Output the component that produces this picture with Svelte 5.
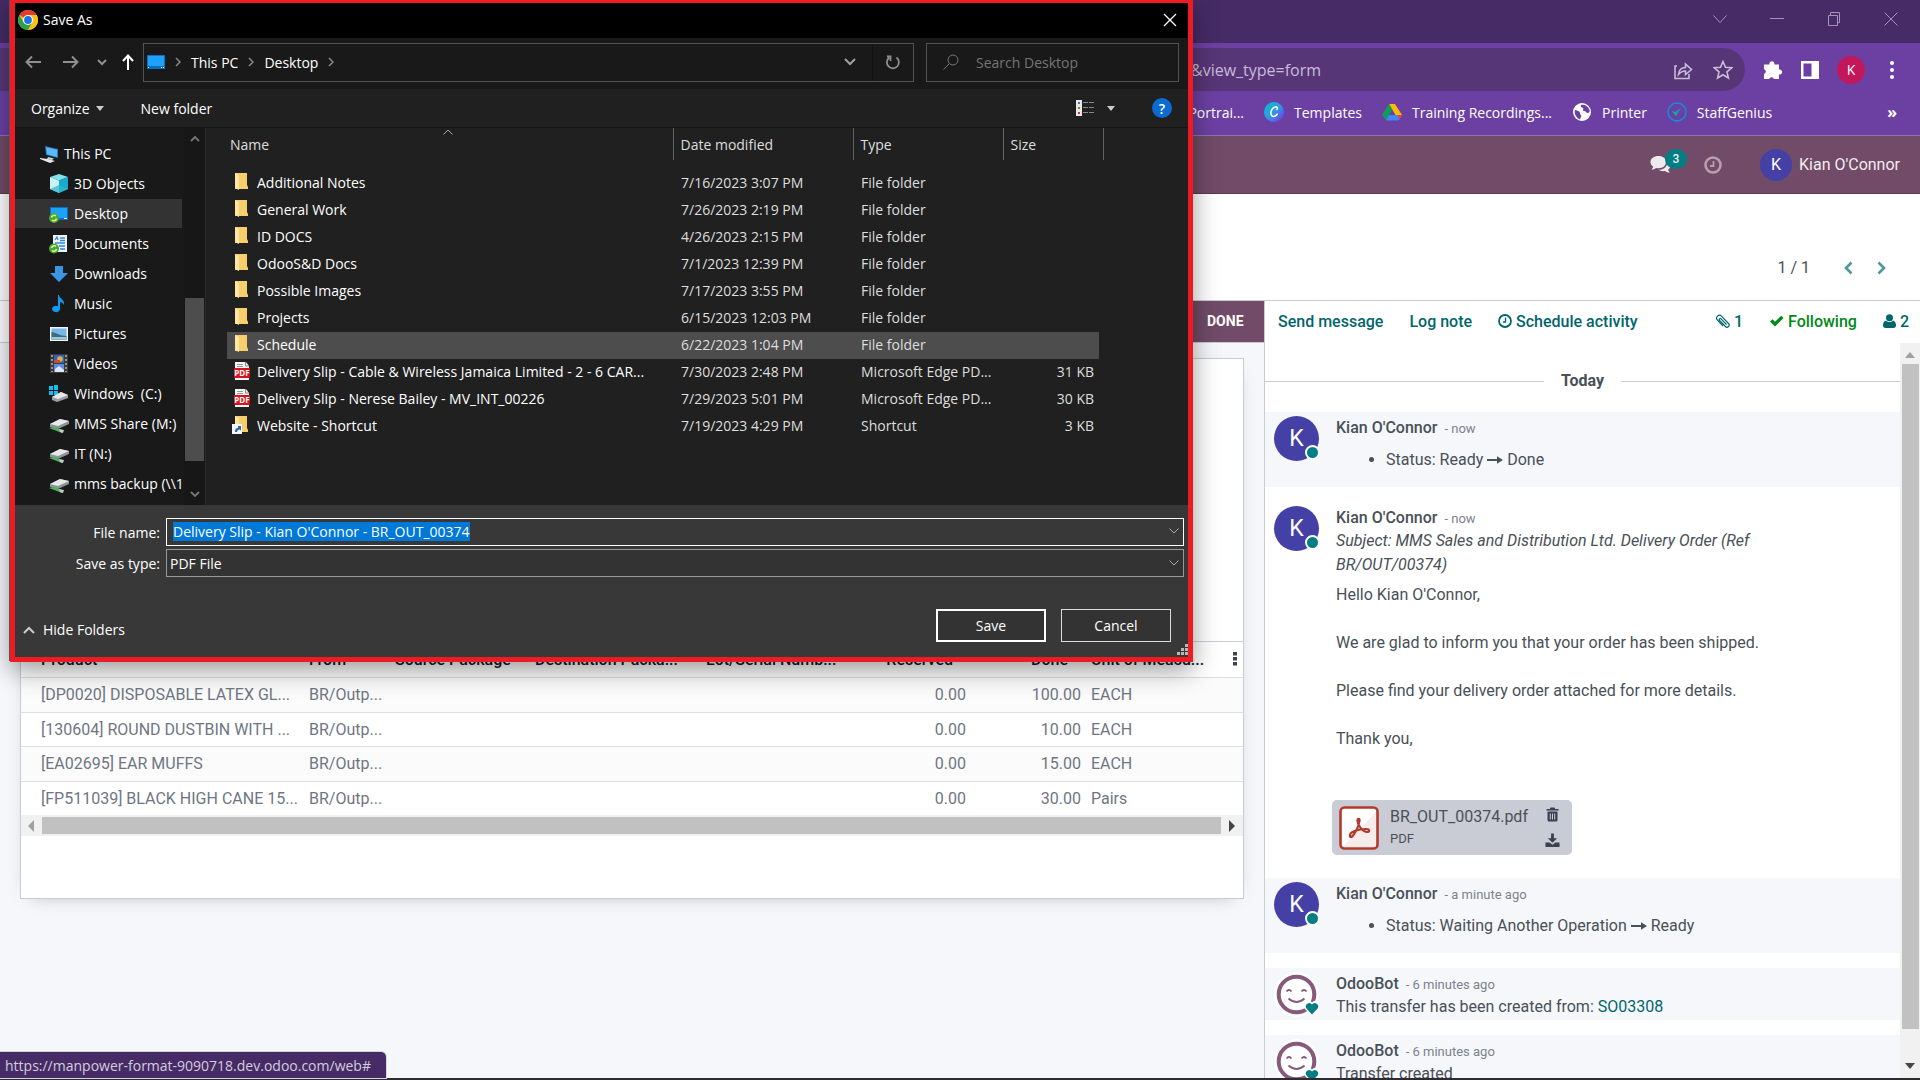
<script>
  import { onMount } from 'svelte';

  let fileNameInput;
  let fileName = $state("Delivery Slip - Kian O'Connor - BR_OUT_00374");

  onMount(() => {
    fileNameInput.focus();
    fileNameInput.select();
  });

  const places = [
    { name: 'This PC', icon: 'pc', root: true },
    { name: '3D Objects', icon: 'cube' },
    { name: 'Desktop', icon: 'desktop', current: true },
    { name: 'Documents', icon: 'docs' },
    { name: 'Downloads', icon: 'down' },
    { name: 'Music', icon: 'music' },
    { name: 'Pictures', icon: 'pics' },
    { name: 'Videos', icon: 'video' },
    { name: 'Windows  (C:)', icon: 'windrive' },
    { name: 'MMS Share (M:)', icon: 'netdrive' },
    { name: 'IT (N:)', icon: 'netdrive' },
    { name: 'mms backup (\\\\1', icon: 'netdrive' }
  ];

  const files = [
    { name: 'Additional Notes', date: '7/16/2023 3:07 PM', type: 'File folder', size: '', icon: 'folder' },
    { name: 'General Work', date: '7/26/2023 2:19 PM', type: 'File folder', size: '', icon: 'folder' },
    { name: 'ID DOCS', date: '4/26/2023 2:15 PM', type: 'File folder', size: '', icon: 'folder' },
    { name: 'OdooS&D Docs', date: '7/1/2023 12:39 PM', type: 'File folder', size: '', icon: 'folder' },
    { name: 'Possible Images', date: '7/17/2023 3:55 PM', type: 'File folder', size: '', icon: 'folder' },
    { name: 'Projects', date: '6/15/2023 12:03 PM', type: 'File folder', size: '', icon: 'folder' },
    { name: 'Schedule', date: '6/22/2023 1:04 PM', type: 'File folder', size: '', icon: 'folder', hover: true },
    { name: 'Delivery Slip - Cable & Wireless Jamaica Limited - 2 - 6 CAR...', date: '7/30/2023 2:48 PM', type: 'Microsoft Edge PD...', size: '31 KB', icon: 'pdf' },
    { name: 'Delivery Slip - Nerese Bailey - MV_INT_00226', date: '7/29/2023 5:01 PM', type: 'Microsoft Edge PD...', size: '30 KB', icon: 'pdf' },
    { name: 'Website - Shortcut', date: '7/19/2023 4:29 PM', type: 'Shortcut', size: '3 KB', icon: 'shortcut' }
  ];

  const moves = [
    { product: '[DP0020] DISPOSABLE LATEX GL...', from: 'BR/Outp...', reserved: '0.00', done: '100.00', uom: 'EACH' },
    { product: '[130604] ROUND DUSTBIN WITH ...', from: 'BR/Outp...', reserved: '0.00', done: '10.00', uom: 'EACH' },
    { product: '[EA02695] EAR MUFFS', from: 'BR/Outp...', reserved: '0.00', done: '15.00', uom: 'EACH' },
    { product: '[FP511039] BLACK HIGH CANE 15...', from: 'BR/Outp...', reserved: '0.00', done: '30.00', uom: 'Pairs' }
  ];
</script>

{#snippet placeIcon(kind)}
  <svg class="place-icon" viewBox="0 0 20 20" aria-hidden="true">
    {#if kind === 'pc'}
      <path d="M6 2l13 3v9L7 11z" fill="#1c7fc4" /><path d="M7 3.200l11 2.600v7.200L8 10.300z" fill="#5fb8f5" />
      <path d="M9 13l6 1.500-2 1.500-5-1z" fill="#cfd6dc" /><path d="M1 14l8 1 7 2-5 2-10-4z" fill="#e4e8ea" />
    {:else if kind === 'cube'}
      <path d="M10 0l9 3-9 3.500L1 3z" fill="#7fe3ea" /><path d="M1 3l9 3.500V19l-9-4z" fill="#c9f2f4" /><path d="M19 3l-9 3.500V19l9-4z" fill="#18a9cf" /><path d="M1 15l9-4 9 4-9 4z" fill="#2fb9d1" opacity=".75" />
    {:else if kind === 'desktop'}
      <rect x="1" y="3" width="18" height="13" fill="#0b6fc0" /><rect x="2" y="4" width="16" height="10" fill="#1da1ff" /><rect x="15" y="14" width="3" height="1" fill="#fff" />
      <circle cx="5" cy="14" r="5" fill="#45a836" /><path d="M2.500 13.500a2.700 2.700 0 0 1 4.500-1.500M7.500 14.500a2.700 2.700 0 0 1-4.500 1.500" stroke="#e6f58f" stroke-width="1.600" fill="none" />
    {:else if kind === 'docs'}
      <path d="M4 1h14v17H4z" fill="#f2f2f2" /><path d="M6 6l2-3 1 3M11 4h5M11 6.500h5M6 9h10M10 12h6M11 15h5" stroke="#2c8be0" stroke-width="1.300" fill="none" />
      <circle cx="5" cy="14.500" r="5" fill="#45a836" /><path d="M2.500 14a2.700 2.700 0 0 1 4.500-1.500M7.500 15a2.700 2.700 0 0 1-4.500 1.500" stroke="#e6f58f" stroke-width="1.600" fill="none" />
    {:else if kind === 'down'}
      <path d="M6 2h8v7h5l-9 9-9-9h5z" fill="#3a97e8" />
    {:else if kind === 'music'}
      <path d="M10 1c0 4 6 4 5 10-1-2-2-3-4-3v7a4 3.200 0 1 1-2-2.800V1z" fill="#0c9cf5" />
    {:else if kind === 'pics'}
      <rect x="1" y="3" width="18" height="14" fill="#f4f4f4" /><rect x="2.500" y="4.500" width="15" height="11" fill="#77b7ea" /><path d="M2.500 8c4 0 8 4 15 4v3.500h-15z" fill="#3c6f77" /><path d="M2.500 13h15v2.500h-15z" fill="#9cc7dc" />
    {:else if kind === 'video'}
      <rect x="1" y="0" width="18" height="19" fill="#3a3a3a" /><rect x="5" y="1" width="10" height="8" fill="#2f63c8" /><rect x="5" y="10" width="10" height="8" fill="#5c8fe0" /><circle cx="11" cy="5" r="2.800" fill="#e7b432" /><path d="M5 6h6v3H5z" fill="#c84a3c" /><path d="M6 15l4-3 5 4v2H6z" fill="#dfe8f5" /><path d="M3 1v17M17 1v17" stroke="#aaa" stroke-width="1.600" stroke-dasharray="2 2" />
    {:else if kind === 'windrive'}
      <path d="M0 2h4v4H0zM5 1h4v5H5zM0 7h4v4H0zM5 7h4v4H5z" fill="#0fc0ef" /><path d="M3 13l9-5 7 3v3l-11 4-5-2z" fill="#9a9da1" /><path d="M3 13l9-5 7 3-10 4z" fill="#e4e6e8" />
    {:else}
      <path d="M1 10l10-5 9 2v3L9 15l-8-2z" fill="#8f9396" /><path d="M1 10l10-5 9 2-11 5z" fill="#e6e8ea" /><path d="M0 14l5-1 8 3v3z" fill="#4bb35c" /><path d="M10 15l5 1-1 3-3-1z" fill="#c4c8ca" />
    {/if}
  </svg>
{/snippet}

{#snippet fileIcon(kind)}
  <svg class="file-icon" viewBox="0 0 20 20" aria-hidden="true">
    {#if kind === 'pdf'}
      <path d="M4 0h11l3 4v14H4z" fill="#f5f5f5" /><path d="M14.500 0v4H18" fill="none" stroke="#888" /><path d="M6 2.500h6M6 4.500h6" stroke="#999" /><rect x="3" y="6" width="16" height="10" rx="1" fill="#d8121d" />
      <text x="11" y="14" text-anchor="middle" font-size="8" font-weight="700" fill="#fff" font-family="Open Sans, sans-serif">PDF</text>
    {:else}
      <path d="M4 0h12v12l1 2v2H4z" fill="#f6cf6c" /><path d="M4 0l4 2v15l-4-2z" fill="#fde6a4" />
      {#if kind === 'shortcut'}
        <rect x="1" y="8" width="10" height="10" fill="#f7f7f7" /><path d="M4 16c0-3 1-4 3-4v-2h3v5l-1-1.500c-2 0-3 1-3 2.500z" fill="#2a62ad" />
      {/if}
    {/if}
  </svg>
{/snippet}

{#snippet userAvatar()}
  <span class="avatar">K<i class="presence"></i></span>
{/snippet}

{#snippet botAvatar()}
  <span class="avatar bot">
    <svg viewBox="0 0 45 45" aria-hidden="true">
      <circle cx="22.500" cy="22.500" r="22.500" fill="#fff" /><circle cx="22.500" cy="22.500" r="17.800" fill="#fff" stroke="#875a7b" stroke-width="4" />
      <path d="M12.500 19.500q2.500-3 5 0M27.500 19.500q2.500-3 5 0M14.500 26.500q8 7 16 0" fill="none" stroke="#875a7b" stroke-width="1.800" />
      <path d="M38 44l-7.500-7.500a4.800 4.800 0 0 1 7.500-6 4.800 4.800 0 0 1 7.500 6z" fill="#fff" /><path d="M38 42.500l-5.500-6a3.300 3.300 0 0 1 5.500-4 3.300 3.300 0 0 1 5.500 4z" fill="#017e84" />
    </svg>
  </span>
{/snippet}

{#snippet arrow()}
  <svg class="arrow" viewBox="0 0 16 10" aria-label="to"><path d="M0 4h10V1.200L16 5l-6 3.800V6H0z" fill="currentColor" /></svg>
{/snippet}

<div class="screen">
  <header class="chrome">
    <div class="tabstrip">
      <button aria-label="Search tabs"><svg viewBox="0 0 14 14"><path d="M.500 3.500l6.500 7 6.500-7" /></svg></button>
      <button aria-label="Minimize"><svg viewBox="0 0 14 14"><path d="M0 6.500h14" /></svg></button>
      <button aria-label="Restore"><svg viewBox="0 0 14 14"><path d="M1.500 3.500h9v10h-9zM3.500 3.500v-3h9v10h-2" /></svg></button>
      <button aria-label="Close"><svg viewBox="0 0 14 14"><path d="M.500.500l13 13M13.500.500l-13 13" /></svg></button>
    </div>
    <div class="toolbar">
      <div class="omnibox">
        <span class="url">&amp;view_type=form</span>
        <button aria-label="Share"><svg viewBox="0 0 20 20"><path d="M4 6H2v12.500h14V14" /><path d="M5.500 14.500c.500-5 3-7 7-7V4l6 5.500-6 5v-3.500c-3 0-5 1-7 3.500z" /></svg></button>
        <button aria-label="Bookmark"><svg viewBox="0 0 20 20"><path d="M10 1.500l2.500 5.700 6.200.600-4.700 4.100 1.400 6.100L10 14.800 4.600 18 6 11.900 1.300 7.800l6.200-.600z" /></svg></button>
      </div>
      <div class="tools">
        <button aria-label="Extensions"><svg viewBox="0 0 20 20"><path d="M1 4.500h5.500a2.500 2.500 0 1 1 4.800 0H16v5a2.500 2.500 0 1 1 0 4.800V19h-5a2.500 2.500 0 0 0-4.800 0H1v-5a2.500 2.500 0 0 0 0-4.800z" fill="#fff" /></svg></button>
        <button aria-label="Side panel"><svg viewBox="0 0 20 20"><path d="M1 1h18v18H1zM3.500 3.500v13h8v-13z" fill="#fff" fill-rule="evenodd" /></svg></button>
        <button class="profile" aria-label="Profile">K</button>
        <button aria-label="Chrome menu"><svg viewBox="0 0 20 20" fill="#fff"><circle cx="10" cy="3" r="2" /><circle cx="10" cy="10" r="2" /><circle cx="10" cy="17" r="2" /></svg></button>
      </div>
    </div>
    <nav class="bookmarks" aria-label="Bookmarks">
      <a href="#portrait">Portrai...</a>
      <a href="#templates"><svg viewBox="0 0 20 20"><defs><linearGradient id="canva" x1="0" y1="0" x2="1" y2="1"><stop offset="0" stop-color="#00c4cc" /><stop offset=".500" stop-color="#2f9ae6" /><stop offset="1" stop-color="#7d2ae8" /></linearGradient></defs><circle cx="10" cy="10" r="10" fill="url(#canva)" /><path d="M13 7.500c1-2-.500-3-2-2.500-3 .800-4.500 4.500-4 7 .500 3.500 4 3 6.200.200" fill="none" stroke="#fff" stroke-width="1.600" stroke-linecap="round" /></svg>Templates</a>
      <a href="#training"><svg viewBox="0 0 20 20"><path d="M7 2h6l7 11h-6.500z" fill="#fbbc04" /><path d="M7 2l3.200 5.500L4 18l-4-5z" fill="#0f9d58" /><path d="M6.800 13H20l-3.500 5.500H4z" fill="#4285f4" /><path d="M16 13h4l-3 4.500z" fill="#ea4335" /></svg>Training Recordings...</a>
      <a href="#printer"><svg viewBox="0 0 20 20"><circle cx="10" cy="10" r="9" fill="#fff" /><path d="M3 8c3 1 5 1 5 3s2 2 1 4-1 3-2 2C4 15 2 12 3 8zM9 3c-1 2 1 2 2 3s-1 3 1 3 2 2 4 2 2-3 1-4c-1-3-5-5-8-4z" fill="#6c40a3" /></svg>Printer</a>
      <a href="#staffgenius"><svg viewBox="0 0 20 20"><circle cx="10" cy="10" r="9" fill="none" stroke="#0a93d8" stroke-width="1.400" /><path d="M5 9l3 1 6-4-5 8z" fill="#0a9bc9" /><path d="M5 9l4 5 1-3z" fill="#13b08a" /></svg>StaffGenius</a>
      <button aria-label="More bookmarks">»</button>
    </nav>
  </header>

  <div class="odoo-nav">
    <button class="chat" aria-label="Conversations">
      <svg viewBox="0 0 21 18"><path d="M8.500 0C13 0 16 2.500 16 6s-3 6.200-7.500 6.200c-.900 0-1.700-.100-2.500-.300-1.300 1-2.600 1.500-4.500 1.700.900-1 1.500-1.800 1.700-3C1.300 9.500.500 7.900.500 6 .500 2.500 4 0 8.500 0z" fill="#efeaed" /><path d="M17.500 5c2 1.300 3 2.700 3 4.600 0 1.700-.800 3-2.300 4 .200 1.300.800 2.200 1.800 3.200-2-.200-3.500-.700-5-1.800-2.600.400-4.800 0-6.500-1.200C13.500 14 17.800 10.800 17.500 5z" fill="#efeaed" /></svg>
      <span class="badge">3</span>
    </button>
    <button class="activities" aria-label="Activities"><svg viewBox="0 0 18 18"><circle cx="9" cy="9" r="7.500" fill="none" stroke="#b5a0af" stroke-width="2.600" /><path d="M9.500 5v5H6" fill="none" stroke="#b5a0af" stroke-width="1.800" /></svg></button>
    <button class="account"><span class="nav-avatar">K</span>Kian O'Connor</button>
  </div>

  <div class="control-panel">
    <span>1 / 1</span>
    <button aria-label="Previous"><svg viewBox="0 0 10 14"><path d="M8.500 1.500L3 7l5.500 5.500" /></svg></button>
    <button aria-label="Next"><svg viewBox="0 0 10 14"><path d="M1.500 1.500L7 7l-5.500 5.500" /></svg></button>
  </div>

  <main class="content">
    <section class="form-view">
      <div class="statusbar"><span class="stage">DONE</span></div>
      <div class="sheet">
        <div class="sheet-top"></div>
        <table class="moves">
          <colgroup><col class="c-product" /><col class="c-from" /><col class="c-source" /><col class="c-dest" /><col class="c-lot" /><col class="c-num" /><col class="c-num" /><col /></colgroup>
          <thead>
            <tr>
              <th>Product</th><th>From</th><th>Source Package</th><th>Destination Packa...</th><th>Lot/Serial Numb...</th><th class="num">Reserved</th><th class="num">Done</th>
              <th><div class="last-head">Unit of Measu...<button aria-label="Optional columns"><svg viewBox="0 0 4 14"><path d="M0 0h4v3.500H0zM0 5h4v3.500H0zM0 10h4v3.500H0z" fill="#374151" /></svg></button></div></th>
            </tr>
          </thead>
          <tbody>
            {#each moves as move}
              <tr>
                <td>{move.product}</td><td>{move.from}</td><td></td><td></td><td></td>
                <td class="num">{move.reserved}</td><td class="num">{move.done}</td><td>{move.uom}</td>
              </tr>
            {/each}
          </tbody>
        </table>
        <div class="hscroll"><svg viewBox="0 0 8 12"><path d="M7 0v12L1 6z" fill="#a0a0a0" /></svg><i></i><svg viewBox="0 0 8 12"><path d="M1 0v12l6-6z" fill="#444" /></svg></div>
      </div>
    </section>

    <aside class="chatter">
      <div class="chatter-bar">
        <button>Send message</button>
        <button>Log note</button>
        <button><svg class="i14" viewBox="0 0 14 14"><circle cx="7" cy="7" r="6" fill="none" stroke="currentColor" stroke-width="1.800" /><path d="M7.500 3.500V8H5" fill="none" stroke="currentColor" stroke-width="1.300" /></svg>Schedule activity</button>
        <button class="attach" aria-label="1 attachment"><svg class="i14" viewBox="0 0 14 14"><path d="M10.500 10.500L5 4.800a1 1 0 0 0-1.500 1.500l6 6.200a2.100 2.100 0 0 0 3-3L5.500 2.200a2.800 2.800 0 0 0-4 4L7 12" fill="none" stroke="currentColor" stroke-width="1.200" /></svg>1</button>
        <button class="following"><svg class="i15" viewBox="0 0 15 14"><path d="M1 7.500l2.500-2.300L6 7.700l6.300-6 2.200 2.300L6 12.500z" fill="currentColor" /></svg>Following</button>
        <button class="followers" aria-label="2 followers"><svg class="i13" viewBox="0 0 13 14"><circle cx="6.500" cy="3.700" r="3.500" fill="currentColor" /><path d="M3 6.500c2 2 5 2 7 0 2 .500 3 2.500 3 4.800C13 13 12 14 10.500 14h-8C1 14 0 13 0 11.300 0 9 1 7 3 6.500z" fill="currentColor" /></svg>2</button>
      </div>
      <div class="thread">
        <div class="messages">
          <div class="day"><b>Today</b></div>
          <article class="message tinted">
            {@render userAvatar()}
            <div class="body">
              <h3>Kian O'Connor <small>- now</small></h3>
              <ul><li>Status: Ready {@render arrow()} Done</li></ul>
            </div>
          </article>
          <article class="message">
            {@render userAvatar()}
            <div class="body">
              <h3>Kian O'Connor <small>- now</small></h3>
              <p class="subject">Subject: MMS Sales and Distribution Ltd. Delivery Order (Ref BR/OUT/00374)</p>
              <div class="mail">
                <p>Hello Kian O'Connor,</p>
                <p>We are glad to inform you that your order has been shipped.</p>
                <p>Please find your delivery order attached for more details.</p>
                <p>Thank you,</p>
              </div>
              <div class="attachment">
                <svg class="pdf" viewBox="0 0 40 44" aria-hidden="true"><rect x="1.500" y="1.500" width="37" height="41" rx="4" fill="#fff" stroke="#b23a2b" stroke-width="2.600" /><path d="M37 6v33q0 2-2 2H4z" fill="#f6eceb" /><path d="M11 30c-1-4 8-7 16-7 4 0 4 3 1 3-4 0-9-6-9.500-11-.300-3 2.500-3 2 0-.500 5-4.500 12-6.500 14.500-1.500 2-3 2-3 .500z" fill="none" stroke="#b23a2b" stroke-width="2.200" /></svg>
                <div class="file"><span>BR_OUT_00374.pdf</span><small>PDF</small></div>
                <div class="file-actions">
                  <button aria-label="Delete"><svg viewBox="0 0 14 15"><path d="M5 .500h4l.600 1.500H13v1.500H1V2h3.400zM2 4.500h10V13q0 1.500-1.500 1.500h-7Q2 14.500 2 13z" fill="#374151" /><path d="M4.800 6.500v6M7 6.500v6M9.200 6.500v6" stroke="#c9ccd4" /></svg></button>
                  <button aria-label="Download"><svg viewBox="0 0 16 15"><path d="M6.500 0h3v5H13L8 10 3 5h3.500zM.500 9.500H5l3 2.500 3-2.500h4.500v5H.500z" fill="#374151" /></svg></button>
                </div>
              </div>
            </div>
          </article>
          <article class="message tinted">
            {@render userAvatar()}
            <div class="body">
              <h3>Kian O'Connor <small>- a minute ago</small></h3>
              <ul><li>Status: Waiting Another Operation {@render arrow()} Ready</li></ul>
            </div>
          </article>
          <article class="message tinted">
            {@render botAvatar()}
            <div class="body">
              <h3>OdooBot <small>- 6 minutes ago</small></h3>
              <p>This transfer has been created from: <a href="#SO03308">SO03308</a></p>
            </div>
          </article>
          <article class="message tinted">
            {@render botAvatar()}
            <div class="body">
              <h3>OdooBot <small>- 6 minutes ago</small></h3>
              <p>Transfer created</p>
            </div>
          </article>
        </div>
        <div class="vscroll"><svg viewBox="0 0 12 8"><path d="M1 7l5-6 5 6z" fill="#a0a0a0" /></svg><i></i><svg viewBox="0 0 12 8"><path d="M1 1l5 6 5-6z" fill="#444" /></svg></div>
      </div>
    </aside>
  </main>
  <div class="taskbar"></div>
  <div class="link-status">https://manpower-format-9090718.dev.odoo.com/web#</div>

  <div class="dialog" role="dialog" aria-label="Save As">
    <div class="title">
      <svg class="chrome-logo" viewBox="0 0 20 20" aria-hidden="true"><circle cx="10" cy="10" r="10" fill="#fbc116" /><path d="M10 10L1.340 5A10 10 0 0 1 18.660 5z" fill="#e33b2e" /><path d="M1.340 5a10 10 0 0 0 8.660 15l4.300-7.500L10 10 5.700 12.500z" fill="#2da14c" /><path d="M10 5h8.700A10 10 0 0 1 10 20l4.300-7.500z" fill="#fbc116" /><circle cx="10" cy="10" r="5" fill="#fff" /><circle cx="10" cy="10" r="3.900" fill="#1a73e8" /></svg>
      <span>Save As</span>
      <button aria-label="Close dialog"><svg viewBox="0 0 14 14"><path d="M1 1l12 12M13 1L1 13" stroke="#fff" stroke-width="1.300" /></svg></button>
    </div>
    <div class="nav-row">
      <div class="arrows">
        <button aria-label="Back"><svg viewBox="0 0 16 16"><path d="M16 8H1.500M7 2.500L1.500 8 7 13.500" /></svg></button>
        <button aria-label="Forward"><svg viewBox="0 0 16 16"><path d="M0 8h14.500M9 2.500L14.500 8 9 13.500" /></svg></button>
        <button class="small" aria-label="Recent locations"><svg viewBox="0 0 10 10"><path d="M1 3l4 4 4-4" /></svg></button>
        <button class="up" aria-label="Up"><svg viewBox="0 0 16 16"><path d="M8 16V2M3 7l5-5.500L13 7" /></svg></button>
      </div>
      <div class="address">
        <svg class="mini-desktop" viewBox="0 0 18 14" aria-hidden="true"><rect width="18" height="14" fill="#0b6fc0" /><rect x="1" y="1" width="16" height="10" fill="#1da1ff" /><path d="M1 12h1v1H1zM14 12h1v1h-1zM16 12h1v1h-1z" fill="#fff" /></svg>
        <svg class="sep" viewBox="0 0 6 10"><path d="M1 1l4 4-4 4" /></svg>
        <button>This PC</button>
        <svg class="sep" viewBox="0 0 6 10"><path d="M1 1l4 4-4 4" /></svg>
        <button>Desktop</button>
        <svg class="sep" viewBox="0 0 6 10"><path d="M1 1l4 4-4 4" /></svg>
        <button class="history" aria-label="Previous locations"><svg viewBox="0 0 12 8"><path d="M1 1l5 5 5-5" /></svg></button>
        <button class="refresh" aria-label="Refresh"><svg viewBox="0 0 16 16"><path d="M11.500 3.500A6 6 0 1 1 4 3.700M2 2.500h3.500V7" /></svg></button>
      </div>
      <label class="search"><svg viewBox="0 0 16 16" aria-hidden="true"><circle cx="10" cy="6" r="5" /><path d="M6.500 9.500L.500 15.500" /></svg><input type="search" placeholder="Search Desktop" aria-label="Search Desktop" /></label>
    </div>
    <div class="commands">
      <button>Organize<i class="tri"></i></button>
      <button>New folder</button>
      <button class="view" aria-label="Change view"><svg viewBox="0 0 18 16"><path d="M0 0h6v16H0z" fill="#e8e8e8" /><path d="M2 2h2v2H2z" fill="#3b78c4" /><path d="M2 7h2v2H2z" fill="#8a7a2a" /><path d="M2 12h2v2H2z" fill="#c43b2a" /><path d="M7 2.500h5M13 2.500h5M7 7.500h5M13 7.500h5M7 12.500h5M13 12.500h5" stroke="#8a8a8a" /></svg><i class="tri"></i></button>
      <button class="help" aria-label="Help">?</button>
    </div>
    <div class="browse">
      <nav class="tree" aria-label="Folders">
        {#each places as place}
          <a href="#place" class:root={place.root} class:current={place.current}>{@render placeIcon(place.icon)}<span>{place.name}</span></a>
        {/each}
      </nav>
      <div class="tree-scroll"><svg viewBox="0 0 10 8"><path d="M1 6l4-4 4 4" /></svg><i></i><svg viewBox="0 0 10 8"><path d="M1 2l4 4 4-4" /></svg></div>
      <div class="files">
        <svg class="sort" viewBox="0 0 10 6" aria-hidden="true"><path d="M.500 5.500L5 1l4.500 4.500" /></svg>
        <table>
          <colgroup><col class="f-name" /><col class="f-date" /><col class="f-type" /><col class="f-size" /></colgroup>
          <thead><tr><th>Name</th><th>Date modified</th><th>Type</th><th>Size</th></tr></thead>
          <tbody>
            {#each files as file}
              <tr class:hover={file.hover}>
                <td><div class="cell">{@render fileIcon(file.icon)}{file.name}</div></td><td>{file.date}</td><td>{file.type}</td><td class="size">{file.size}</td>
              </tr>
            {/each}
          </tbody>
        </table>
      </div>
    </div>
    <div class="footer">
      <div class="fields">
        <label for="file-name">File name:</label>
        <div class="combo active"><input id="file-name" bind:this={fileNameInput} bind:value={fileName} spellcheck="false" autocomplete="off" /><svg viewBox="0 0 10 6"><path d="M.500.500L5 5 9.500.500" /></svg></div>
        <label for="file-type">Save as type:</label>
        <div class="combo"><select id="file-type"><option>PDF File</option></select><svg viewBox="0 0 10 6"><path d="M.500.500L5 5 9.500.500" /></svg></div>
      </div>
      <div class="actions">
        <button class="hide"><svg viewBox="0 0 12 8"><path d="M1 7l5-5 5 5" /></svg>Hide Folders</button>
        <button class="push primary">Save</button>
        <button class="push">Cancel</button>
      </div>
      <svg class="grip" viewBox="0 0 11 11" aria-hidden="true"><path d="M8 0h3v3H8zM4 4h3v3H4zM8 4h3v3H8zM0 8h3v3H0zM4 8h3v3H4zM8 8h3v3H8z" fill="#b8b8b8" /></svg>
    </div>
  </div>
</div>

<style>
  :global(body) { background: #f5f7fb; overflow: hidden; }
  :global(*) { box-sizing: border-box; }
  button { font: inherit; color: inherit; background: none; border: 0; padding: 0; display: flex; align-items: center; }
  a { color: inherit; text-decoration: none; }
  svg { display: block; flex: none; }
  p, h3, ul { margin: 0; padding: 0; }

  .screen { position: relative; height: 100vh; display: flex; flex-direction: column; overflow: hidden; font-family: Roboto, sans-serif; font-size: 16px; color: #495057; }

  /* browser frame */
  .chrome { font-family: "Open Sans", sans-serif; font-size: 14px; background: #6c40a3; color: #fff; border-bottom: 1px solid #9170bb; flex: none; }
  .tabstrip { height: 43px; background: #462b66; display: flex; justify-content: flex-end; align-items: center; gap: 43px; padding: 0 22px 6px 0; }
  .tabstrip svg { width: 14px; height: 14px; fill: none; stroke: #a394b5; }
  .toolbar { height: 53px; display: flex; align-items: center; }
  .omnibox { flex: 1; height: 43px; border-radius: 0 22px 22px 0; background: #573678; display: flex; align-items: center; gap: 20px; padding-right: 12px; }
  .omnibox svg { width: 20px; height: 20px; fill: none; stroke: #c9bcd6; stroke-width: 1.6; }
  .url { font-size: 16px; color: #c9bcd6; margin-left: 1191px; margin-right: auto; }
  .tools { width: 175px; display: flex; align-items: center; gap: 17px; padding-left: 18px; }
  .tools svg { width: 20px; height: 20px; }
  .profile { width: 28px; height: 28px; border-radius: 50%; background: #c2185b; justify-content: center; }
  .bookmarks { height: 39px; display: flex; align-items: center; justify-content: flex-end; gap: 20px; padding: 0 23px 7px 0; }
  .bookmarks a { display: flex; align-items: center; gap: 10px; }
  .bookmarks svg { width: 20px; height: 20px; }
  .bookmarks button { margin-left: 95px; font-weight: 700; font-size: 16px; }

  /* app bar */
  .odoo-nav { height: 58px; flex: none; background: #714b67; border-bottom: 1px solid #5a3c52; display: flex; justify-content: flex-end; align-items: center; padding-right: 20px; color: #f1edf0; }
  .chat { position: relative; margin-right: 33px; }
  .chat svg { width: 21px; height: 18px; }
  .badge { position: absolute; left: 15px; top: -7px; min-width: 22px; height: 20px; border-radius: 10px; background: #017e84; font-size: 12px; font-weight: 500; line-height: 20px; text-align: center; }
  .activities { margin-right: 38px; }
  .activities svg { width: 18px; height: 18px; }
  .account { gap: 7px; }
  .nav-avatar { width: 32px; height: 32px; border-radius: 50%; background: #4540a5; color: #fff; line-height: 32px; text-align: center; }
  .control-panel { height: 107px; flex: none; background: #fff; border-bottom: 1px solid #c9ccd2; display: flex; justify-content: flex-end; align-items: flex-end; padding: 0 33px 23px 0; line-height: 19px; }
  .control-panel span { margin-right: 33px; }
  .control-panel button { width: 10px; height: 19px; margin-left: 24px; }
  .control-panel span + button { margin-left: 0; }
  .control-panel svg { width: 10px; height: 14px; fill: none; stroke: #4d9a9c; stroke-width: 2.6; }

  .content { flex: 1; min-height: 0; display: flex; }

  /* delivery form */
  .form-view { flex: 1; min-width: 0; }
  .statusbar { height: 42px; background: #fff; border-bottom: 1px solid #c9ccd2; display: flex; justify-content: flex-end; }
  .stage { width: 72px; background: #714b67; color: #fff; font-size: 14px; font-weight: 700; line-height: 41px; padding-left: 15px; }
  .sheet { margin: 15px 20px 0; height: 541px; background: #fff; border: 1px solid #c9ccd2; box-shadow: 0 5px 20px -12px #0006; }
  .sheet-top { height: 283px; border-bottom: 1px solid #c9ccd2; }
  .moves { width: 100%; border-collapse: collapse; table-layout: fixed; color: #6f7683; }
  .c-product { width: 282px; }
  .c-from { width: 86px; }
  .c-source { width: 140px; }
  .c-dest { width: 171px; }
  .c-lot { width: 157px; }
  .c-num { width: 115px; }
  .moves tr { height: 35px; }
  .moves tbody tr:nth-child(even) { height: 34px; }
  .moves th, .moves td { text-align: left; padding: 0 6px; white-space: nowrap; overflow: hidden; border-bottom: 1px solid #dcdee2; }
  .moves th { color: #111827; font-weight: 500; }
  .moves th:last-child, .moves td:last-child { padding-left: 4px; }
  .moves th:first-child, .moves td:first-child { padding-left: 20px; padding-right: 0; }
  .moves tbody tr:nth-child(odd) { background: #fbfbfb; }
  .moves tbody tr:last-child td { border-bottom: 0; }
  .moves td.num { text-align: right; }
  .moves th.num { text-align: right; padding-right: 19px; }
  .last-head { display: flex; justify-content: space-between; align-items: center; }
  .last-head svg { width: 4px; height: 14px; }
  .hscroll { height: 21px; background: #f1f1f1; display: flex; align-items: center; justify-content: space-between; padding: 0 7px 0 6px; gap: 7px; }
  .hscroll svg { width: 8px; height: 12px; }
  .hscroll i { flex: 1; height: 17px; background: #c1c1c1; }

  /* chatter */
  .chatter { width: 656px; background: #fff; border-left: 1px solid #c9ccd2; display: flex; flex-direction: column; }
  .chatter-bar { height: 42px; flex: none; display: flex; align-items: center; gap: 26px; padding: 0 11px 2px 13px; font-weight: 500; color: #01666b; }
  .chatter-bar button { gap: 4px; }
  .attach { margin-left: auto; }
  .following { color: #008818; }
  .i14 { width: 14px; height: 14px; }
  .i15 { width: 15px; height: 14px; }
  .i13 { width: 13px; height: 14px; }
  .thread { flex: 1; min-height: 0; display: flex; }
  .messages { flex: 1; overflow: hidden; line-height: 24px; }
  .day { display: flex; align-items: center; gap: 17px; height: 24px; margin: 26px 0 19px; }
  .day b { font-weight: 700; }
  .day::before, .day::after { content: ""; flex: 1; height: 1px; background: #c9ccd2; }
  .message { display: flex; gap: 17px; padding: 4px 0 1px 9px; margin-bottom: 15px; }
  .tinted { background: #f5f7fb; }
  .avatar { position: relative; flex: none; width: 45px; height: 45px; border-radius: 50%; background: #4540a5; color: #fff; font-size: 23px; line-height: 45px; text-align: center; }
  .presence { position: absolute; right: -1px; bottom: 1px; width: 15px; height: 15px; border-radius: 50%; background: #017e84; border: 2px solid #fff; }
  .bot { background: none; }
  .bot svg { width: 45px; height: 45px; }
  .body { width: 446px; }
  .body h3 { font-size: 16px; font-weight: 500; line-height: 24px; height: 23px; }
  .body small { font-size: 13px; font-weight: 400; color: #7c828d; margin-left: 3px; }
  .body ul { margin: 9px 0 14px; padding-left: 50px; }
  .arrow { display: inline-block; width: 16px; height: 10px; }
  .body a { color: #01666b; }
  .subject { font-style: italic; }
  .mail { margin: 6px 0 49px; display: grid; gap: 24px; }
  .attachment { width: 240px; height: 55px; margin: 0 0 7px -4px; background: #c9ccd4; border-radius: 5px; display: flex; align-items: center; padding: 0 12px 0 7px; }
  .pdf { width: 40px; height: 44px; }
  .file { flex: 1; display: flex; flex-direction: column; padding-left: 11px; line-height: 22px; }
  .file small { color: #495057; margin: 0; }
  .file-actions { display: flex; flex-direction: column; align-items: center; gap: 11px; }
  .file-actions svg { width: 15px; height: 15px; }
  .vscroll { width: 20px; background: #f1f1f1; display: flex; flex-direction: column; align-items: center; padding: 8px 0; gap: 5px; }
  .vscroll svg { width: 12px; height: 8px; }
  .vscroll i { flex: 1; width: 17px; margin-bottom: 28px; background: #c1c1c1; }

  .taskbar { height: 2px; flex: none; background: #2d2b2f; }
  .link-status { position: absolute; left: 0; bottom: 2px; height: 26px; padding: 0 15px 0 5px; background: #462b66; color: #d5cddd; border-radius: 0 5px 0 0; box-shadow: 0 0 0 1px #d5d5de; font-family: "Open Sans", sans-serif; font-size: 14px; line-height: 27px; }

  /* save dialog */
  .dialog { position: absolute; left: 10px; top: -2px; width: 1183px; max-width: 100vw; border: 5px solid #ed1c24; box-shadow: -2px 0 0 -1px #555, 0 8px 24px #0006; background: #202020; color: #fff; font-family: "Open Sans", sans-serif; font-size: 14px; }
  .dialog svg { fill: none; }
  .title { height: 35px; background: #000; display: flex; align-items: center; gap: 5px; padding: 0 11px 2px 3px; }
  .chrome-logo { width: 20px; height: 20px; }
  .title button { margin-left: auto; }
  .title button svg { width: 14px; height: 14px; }
  .nav-row { height: 51px; background: #191919; display: flex; align-items: center; padding: 0 9px 3px 10px; }
  .arrows { width: 118px; display: flex; align-items: center; gap: 22px; }
  .arrows svg { width: 16px; height: 16px; stroke: #8f8f8f; stroke-width: 2; }
  .arrows .small { margin-right: -9px; margin-left: -4px; }
  .arrows .small svg { width: 10px; height: 10px; }
  .arrows .up svg { stroke: #fff; }
  .address { flex: 1; height: 39px; border: 1px solid #535353; display: flex; align-items: center; padding-left: 3px; gap: 10px; }
  .mini-desktop { width: 18px; height: 14px; }
  .sep { width: 6px; height: 10px; stroke: #8a8a8a; stroke-width: 1.5; }
  .history { margin-left: auto; width: 20px; }
  .history svg { width: 12px; height: 8px; stroke: #a0a0a0; stroke-width: 2; }
  .refresh { width: 41px; height: 37px; border-left: 1px solid #111; margin-left: -2px; justify-content: center; }
  .refresh svg { width: 16px; height: 16px; stroke: #8f8f8f; stroke-width: 1.8; }
  .search { width: 253px; height: 39px; margin-left: 12px; border: 1px solid #535353; display: flex; align-items: center; gap: 17px; padding: 0 16px; }
  .search svg { width: 16px; height: 16px; stroke: #777; }
  .search input { flex: 1; min-width: 0; border: 0; outline: 0; background: none; padding: 0; font: inherit; color: #fff; appearance: none; }
  .search input::placeholder { color: #757575; }
  .commands { height: 39px; border-bottom: 1px solid #151515; display: flex; align-items: center; padding: 0 16px 0 16px; gap: 37px; }
  .tri { border: 4px solid transparent; border-top: 5px solid #ccc; border-bottom: 0; margin-left: 6px; }
  .view { margin-left: auto; gap: 7px; }
  .view svg { width: 18px; height: 16px; }
  .help { width: 20px; height: 20px; border-radius: 50%; background: #0a6cd0; justify-content: center; font-weight: 600; }
  .browse { height: 377px; display: flex; }
  .tree { width: 169px; background: #191919; overflow: hidden; padding: 11px 2px 0 0; }
  .tree a { height: 29px; margin-bottom: 1px; display: flex; align-items: center; gap: 5px; padding-left: 34px; white-space: pre; overflow: hidden; }
  .tree .root { padding-left: 24px; }
  .tree .current { background: #333; }
  .place-icon { width: 20px; height: 20px; }
  .tree-scroll { width: 22px; background: #171717; border-right: 1px solid #2b2b2b; display: flex; flex-direction: column; align-items: center; padding: 7px 2px; }
  .tree-scroll svg { width: 10px; height: 8px; stroke: #777; stroke-width: 1.8; }
  .tree-scroll i { width: 19px; height: 163px; margin: auto 0 29px; background: #4d4d4d; }
  .files { position: relative; flex: 1; min-width: 0; background: #202020; padding-left: 21px; }
  .sort { position: absolute; left: 237px; top: 1px; width: 10px; height: 6px; stroke: #aaa; }
  .files table { width: 876px; table-layout: fixed; border-collapse: collapse; }
  .f-name { width: 446px; }
  .f-date { width: 180px; }
  .f-type { width: 150px; }
  .f-size { width: 100px; }
  .files th { height: 32px; padding: 0 7px; text-align: left; font-weight: 400; color: #dedede; border-right: 1px solid #636363; }
  .files th:first-child { padding-left: 3px; }
  .files thead::after { content: ""; display: block; height: 10px; }
  .files td { height: 27px; padding: 0 7px 2px 8px; white-space: nowrap; color: #dedede; }
  .files td:first-child { padding: 0 0 2px 4px; color: #fff; }
  .files .cell { display: flex; align-items: center; gap: 6px; }
  .files .size { text-align: right; padding-right: 9px; }
  .files .hover { background: linear-gradient(#4d4d4d, #4d4d4d) no-repeat 0 0 / 872px 100%; }
  .file-icon { width: 20px; height: 20px; }
  .footer { position: relative; height: 152px; background: #383838; padding: 13px 4px 0 0; }
  .fields { display: grid; grid-template-columns: 145px 1fr; column-gap: 6px; row-gap: 3px; align-items: center; }
  .fields label { text-align: right; }
  .combo { height: 28px; border: 1px solid #999; background: #333; display: flex; align-items: center; padding: 0 4px 0 3px; }
  .combo.active { border-color: #fff; padding: 0 4px 2px 6px; background: #383838; }
  .combo input, .combo select { flex: 1; min-width: 0; border: 0; outline: 0; background: none; padding: 0; font: inherit; color: #fff; appearance: none; }
  .combo input::selection { background: #0078d7; color: #fff; }
  .combo svg { width: 10px; height: 6px; stroke: #aaa; }
  .actions { display: flex; align-items: center; margin-top: 32px; padding-right: 13px; gap: 15px; }
  .hide { gap: 8px; margin: 8px auto 0 8px; }
  .hide svg { width: 12px; height: 8px; stroke: #ccc; stroke-width: 2; }
  .push { width: 110px; height: 33px; justify-content: center; background: #333; border: 1px solid #ddd; }
  .primary { border: 2px solid #fff; }
  .grip { position: absolute; right: 0; bottom: 2px; width: 11px; height: 11px; }
</style>
